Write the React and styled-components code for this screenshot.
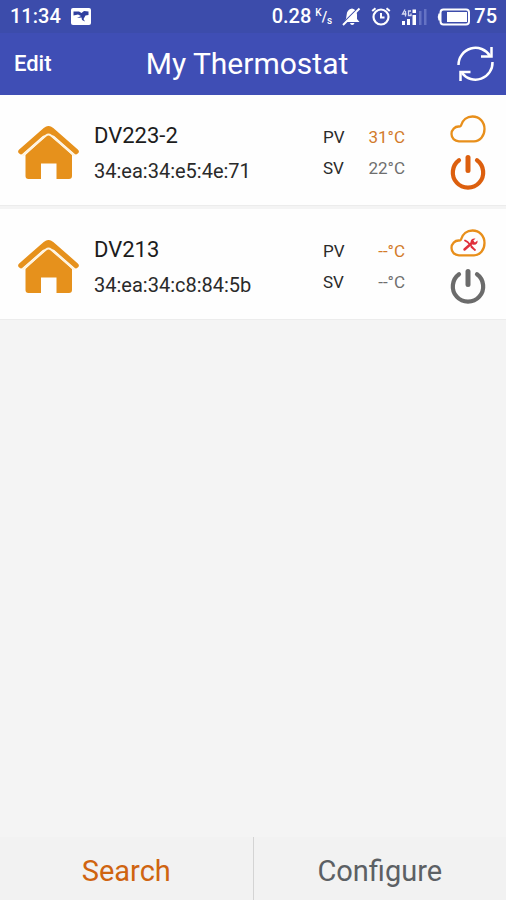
import React from 'react'
import styled, { createGlobalStyle } from 'styled-components'

const GlobalStyle = createGlobalStyle`
    * {
        box-sizing: border-box;
    }
    body {
        margin: 0;
        background-color: #f4f4f4;
        font-family: Roboto, 'Liberation Sans', sans-serif;
    }
`

const Screen = styled.div`
    display: flex;
    flex-direction: column;
    min-height: 100vh;
`

const Top = styled.div`
    background-color: #3f4eb5;
    color: white;
`

const StatusBar = styled.div`
    display: flex;
    align-items: center;
    height: 33px;
    padding: 0 9px 0 10px;
    background-color: #3c4cab;
    font-size: 20px;
    font-weight: 500;
    line-height: 33px;
`

const StatusGroup = styled.div`
    display: flex;
    align-items: center;
    gap: 10px;
    margin-left: ${(props) => (props.$end ? 'auto' : '0')};
`

const Pair = styled.span`
    display: flex;
    align-items: center;
    gap: 4px;
`

const Unit = styled.span`
    display: flex;
    font-size: 10px;
    line-height: 14px;
`

const UnitPart = styled.span`
    align-self: ${(props) => props.$side};
    line-height: ${(props) => (props.$side === 'center' ? '18px' : '10px')};
    font-size: ${(props) => (props.$side === 'center' ? '14px' : '10px')};
`

const Header = styled.header`
    display: grid;
    grid-template-columns: 1fr auto 1fr;
    align-items: center;
    height: 62px;
    padding: 0 12px 0 14px;
`

const Title = styled.h1`
    margin: 0;
    padding-right: 14px;
    font-size: 30px;
    font-weight: 400;
    line-height: 40px;
`

const HeaderButton = styled.button`
    display: flex;
    justify-self: ${(props) => (props.$end ? 'end' : 'start')};
    padding: 0;
    border: none;
    background: none;
    color: inherit;
    font-family: inherit;
    font-size: 22px;
    font-weight: 500;
    line-height: 28px;
    cursor: pointer;
`

const DeviceList = styled.ul`
    display: flex;
    flex-direction: column;
    flex: 1;
    gap: 4px;
    margin: 0;
    padding: 0;
    list-style: none;
`

const Device = styled.li`
    display: flex;
    align-items: center;
    padding: 20px 20px 15px 18px;
    background-color: #fefefe;
    box-shadow: 0 1px 0 #ececec;
`

const Info = styled.div`
    flex: 1;
    min-width: 0;
    margin-left: 15px;
`

const Name = styled.h2`
    margin: 0;
    color: #1c1c1c;
    font-size: 22px;
    font-weight: 400;
    line-height: 36px;
`

const Address = styled.p`
    margin: 0;
    color: #2a2a2a;
    font-size: 20px;
    line-height: 34px;
`

const Readings = styled.dl`
    display: grid;
    grid-template-columns: auto 1fr;
    width: 82px;
    margin: 0 45px 0 0;
    font-size: 17px;
    line-height: 31px;
`

const Label = styled.dt`
    color: #2a2a2a;
`

const Value = styled.dd`
    margin: 0;
    color: ${(props) => (props.$current ? '#d27a2a' : '#6e6e6e')};
    text-align: right;
`

const Status = styled.div`
    display: flex;
    flex-direction: column;
    align-items: center;
    gap: 11px;
`

const PowerButton = styled.button`
    display: flex;
    padding: 0;
    border: none;
    background: none;
    color: ${(props) => (props.$on ? '#dc5f0e' : '#6b6b6b')};
    cursor: pointer;
`

const Footer = styled.footer`
    display: flex;
    height: 63px;
    background-color: #f2f2f2;
`

const FooterButton = styled.button`
    flex: 1;
    padding: 4px 0 0;
    border: none;
    background: none;
    color: ${(props) => (props.$active ? '#cf6410' : '#5c6064')};
    font-family: inherit;
    font-size: 29px;
    line-height: 36px;
    cursor: pointer;

    & + & {
        border-left: 1px solid #d4d4d4;
    }
`

const PictureIcon = () => (
  <svg width="20" height="17" viewBox="0 0 20 17" aria-hidden="true">
    <rect width="20" height="17" rx="2" fill="#fff" />
    <path d="M2.5 3.5 H8 L10.5 5 L13 3 L17.5 3.5 V7 L14.5 7.5 L12.5 11 L14 13.5 L11 12 L10.5 9.5 L6 10 L10 8 L7 6.5 L2.5 7.5 Z" fill="#2f3f9f" />
  </svg>
)

const MutedIcon = () => (
  <svg width="19" height="19" viewBox="0 0 19 19" aria-hidden="true">
    <path d="M10 1.5 C6.5 2 4.8 4.5 4.6 8 L4 12 L2 15 H17.5 L15 12 V7.5 C14.8 4.2 13 2 10 1.5 Z M8 16 H12.5 Q12 18 10.2 18 Q8.5 18 8 16 Z" fill="#fff" />
    <path d="M1.5 15.8 L15.8 1.5" stroke="#3c4cab" strokeWidth="1.6" />
    <path d="M1 18 L17.5 1.5" stroke="#fff" strokeWidth="2" />
  </svg>
)

const AlarmIcon = () => (
  <svg width="20" height="19" viewBox="0 0 20 19" fill="none" stroke="#fff" aria-hidden="true">
    <circle cx="10" cy="10" r="7.5" strokeWidth="2.2" />
    <path d="M10 6 V10.5 H13.5" strokeWidth="2" />
    <path d="M1.2 4 L4.5 1.2 M15.5 1.2 L18.8 4" strokeWidth="2" />
  </svg>
)

const SignalIcon = () => (
  <svg width="26" height="18" viewBox="0 0 26 18" aria-hidden="true">
    <path d="M1 13 H4 V17 H1 Z M6 11 H9 V17 H6 Z M11.5 7 H15 V17 H11.5 Z M11.5 1.5 H15 V5 H11.5 Z" fill="#fff" />
    <path d="M4 1.5 L1.5 6 H5.5 M4.5 3 V8.5 M10 3 H7.5 V7.5 H10 V5.5" fill="none" stroke="#d5d9f1" strokeWidth="1.3" />
    <path d="M18 3 H20.5 V17 H18 Z M23 1 H25.5 V17 H23 Z" fill="#6573c4" />
  </svg>
)

const BatteryIcon = () => (
  <svg width="33" height="18" viewBox="0 0 33 18" aria-hidden="true">
    <rect x="3.5" y="1.5" width="28.5" height="15" rx="3" fill="none" stroke="#fff" strokeWidth="2" />
    <path d="M3 5.5 H1.5 Q0 9 1.5 12.5 H3 Z" fill="#fff" />
    <rect x="10" y="4" width="20" height="10" fill="#fff" />
  </svg>
)

const RefreshIcon = () => (
  <svg width="37" height="38" viewBox="0 0 37 38" fill="none" stroke="#fff" strokeWidth="2.5" aria-hidden="true">
    <path d="M1.5 20 A17 17 0 0 1 33 11" />
    <path d="M35.5 17 A17 17 0 0 1 5 28" />
    <path d="M34.5 2 V11.5 H24" />
    <path d="M3.5 36 V27 H13.5" />
  </svg>
)

const HouseIcon = () => (
  <svg width="61" height="55" viewBox="0 0 61 55" aria-hidden="true">
    <path d="M3 26.5 L27.5 5 Q30.5 2.5 33.5 5 L58 26.5" fill="none" stroke="#e6911c" strokeWidth="5.5" strokeLinecap="round" />
    <path d="M30.5 1 L41 10.5 H20 Z" fill="#e6911c" />
    <path d="M30.5 9 L54 30 V51 Q54 54 51 54 H38.5 V38.5 H23 V54 H10.5 Q7.5 54 7.5 51 V30 Z" fill="#e6911c" />
    <path d="M4.5 30.5 L28 10.5 Q30.5 8.5 33 10.5 L56.5 30.5" fill="none" stroke="#fff4df" strokeWidth="2" />
  </svg>
)

const CloudIcon = ({ fault }) => (
  <svg width="36" height="28" viewBox="0 0 36 28" fill="none" role="img" aria-label={fault ? 'Cloud fault' : 'Cloud connected'}>
    <path d="M9 26.3 C4.5 26.3 1.5 23 1.5 19 C1.5 14.5 5 11.5 8.5 11.5 Q10.5 11.8 11 10.5 C12.5 5 17 1.5 22.5 1.5 C29.5 1.5 34.5 7 34.5 14 C34.5 21 30 26.3 24 26.3 Z" stroke="#e88f1b" strokeWidth="2.3" />
    {fault && (
      <>
        <path d="M14.5 20.5 L23 13" stroke="#e0303c" strokeWidth="2.5" strokeLinecap="round" />
        <path d="M15 11.5 L17.5 13 L24 20 M21.5 18 L25 21" stroke="#e0303c" strokeWidth="1.8" strokeLinecap="round" />
        <path d="M25.5 9.5 L23 12 L25 13.5 L27.5 11.5 C28 14.5 26 16.5 22.5 15.5 L20.5 13.5 C20.5 10.5 22.5 9 25.5 9.5 Z" fill="#e0303c" />
      </>
    )}
  </svg>
)

const PowerIcon = () => (
  <svg width="36" height="36" viewBox="0 0 36 36" fill="none" stroke="currentColor" strokeLinecap="round" aria-hidden="true">
    <path d="M9 6.2 A15.2 15.2 0 1 0 27 6.2" strokeWidth="4.2" />
    <path d="M18 3.5 V16.5" strokeWidth="5" />
  </svg>
)

const devices = [
  { name: 'DV223-2', address: '34:ea:34:e5:4e:71', pv: '31°C', sv: '22°C', on: true, fault: false },
  { name: 'DV213', address: '34:ea:34:c8:84:5b', pv: '--°C', sv: '--°C', on: false, fault: true },
]

const DeviceItem = ({ item }) => {
  return (
    <Device>
      <HouseIcon />
      <Info>
        <Name>{item.name}</Name>
        <Address>{item.address}</Address>
      </Info>
      <Readings>
        <Label>PV</Label>
        <Value $current>{item.pv}</Value>
        <Label>SV</Label>
        <Value>{item.sv}</Value>
      </Readings>
      <Status>
        <CloudIcon fault={item.fault} />
        <PowerButton $on={item.on} aria-label={`Power ${item.name}`} aria-pressed={item.on}>
          <PowerIcon />
        </PowerButton>
      </Status>
    </Device>
  )
}

const App = () => {
  return (
    <Screen>
      <GlobalStyle />
      <Top>
        <StatusBar>
          <StatusGroup>
            <span>11:34</span>
            <PictureIcon />
          </StatusGroup>
          <StatusGroup $end>
            <Pair>
              0.28
              <Unit>
                <UnitPart $side="flex-start">K</UnitPart>
                <UnitPart $side="center">/</UnitPart>
                <UnitPart $side="flex-end">s</UnitPart>
              </Unit>
            </Pair>
            <MutedIcon />
            <AlarmIcon />
            <SignalIcon />
            <Pair>
              <BatteryIcon />
              75
            </Pair>
          </StatusGroup>
        </StatusBar>
        <Header>
          <HeaderButton>Edit</HeaderButton>
          <Title>My Thermostat</Title>
          <HeaderButton $end aria-label="Refresh">
            <RefreshIcon />
          </HeaderButton>
        </Header>
      </Top>
      <DeviceList>
        {devices.map((item) => (
          <DeviceItem item={item} key={item.address} />
        ))}
      </DeviceList>
      <Footer>
        <FooterButton $active>Search</FooterButton>
        <FooterButton>Configure</FooterButton>
      </Footer>
    </Screen>
  )
}

export default App
